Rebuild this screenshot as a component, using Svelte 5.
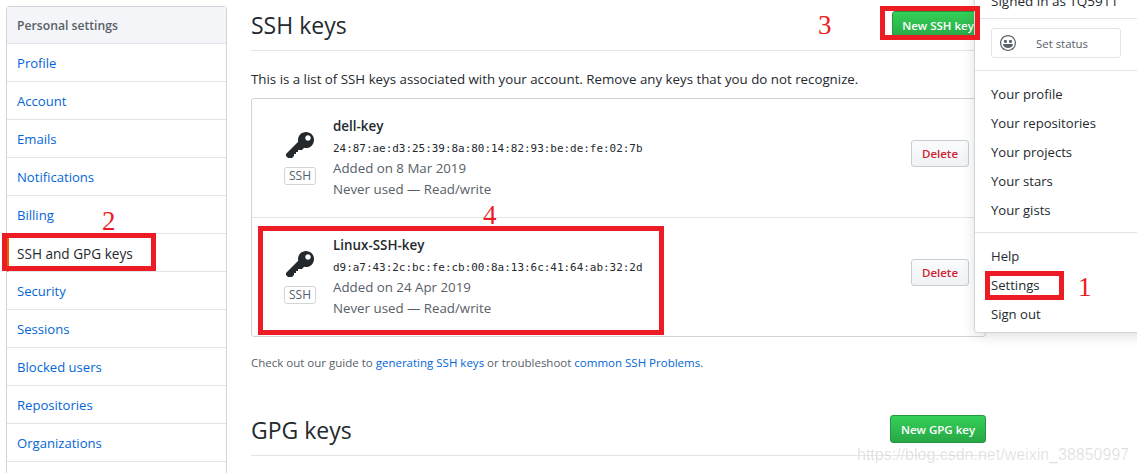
<script>
    const navItems = ["Profile", "Account", "Emails", "Notifications", "Billing", "SSH and GPG keys", "Security", "Sessions", "Blocked users", "Repositories", "Organizations", ""];

    const keys = [
        { name: "dell-key", print: "24:87:ae:d3:25:39:8a:80:14:82:93:be:de:fe:02:7b", added: "Added on 8 Mar 2019" },
        { name: "Linux-SSH-key", print: "d9:a7:43:2c:bc:fe:cb:00:8a:13:6c:41:64:ab:32:2d", added: "Added on 24 Apr 2019" }
    ];

    const keyPath = "M12.83 2.17C12.08 1.42 11.14 1.03 10 1c-1.13.03-2.08.42-2.83 1.17S6.04 3.86 6.01 5c0 .3.03.59.09.89L0 12v1l1 1h2l1-1v-1h1v-1h1v-1h2l1.09-1.11c.3.08.59.11.91.11 1.14-.03 2.08-.42 2.83-1.17S13.97 6.14 14 5c-.03-1.14-.42-2.08-1.17-2.83zM11 5.38c-.77 0-1.38-.61-1.38-1.38 0-.77.61-1.38 1.38-1.38.77 0 1.38.61 1.38 1.38 0 .77-.61 1.38-1.38 1.38z";
    const smileyPath = "M8 0C3.58 0 0 3.58 0 8s3.58 8 8 8 8-3.58 8-8-3.58-8-8-8zm4.81 12.81a6.72 6.72 0 0 1-2.17 1.45c-.83.36-1.72.53-2.64.53-.92 0-1.81-.17-2.64-.53-.81-.34-1.55-.83-2.17-1.45a6.773 6.773 0 0 1-1.45-2.17A6.59 6.59 0 0 1 1.21 8c0-.92.17-1.81.53-2.64.34-.81.83-1.55 1.45-2.17.62-.62 1.36-1.11 2.17-1.45A6.59 6.59 0 0 1 8 1.21c.92 0 1.81.17 2.64.53.81.34 1.55.83 2.17 1.45.62.62 1.11 1.36 1.45 2.17.36.83.53 1.72.53 2.64 0 .92-.17 1.81-.53 2.64-.34.81-.83 1.55-1.45 2.17zM4 6.8v-.59c0-.66.53-1.19 1.2-1.19h.59c.66 0 1.19.53 1.19 1.19v.59c0 .67-.53 1.2-1.19 1.2H5.2C4.53 8 4 7.47 4 6.8zm5 0v-.59c0-.66.53-1.19 1.2-1.19h.59c.66 0 1.19.53 1.19 1.19v.59c0 .67-.53 1.2-1.19 1.2h-.59C9.53 8 9 7.47 9 6.8zm4 3.2c-.72 1.88-2.91 3-5 3s-4.28-1.13-5-3c-.14-.39.23-1 .66-1h8.59c.41 0 .89.61.75 1z";
</script>

<div class="page">
    <nav class="sidebar">
        <div class="nav-head">Personal settings</div>
        {#each navItems as item}
            <div class="nav-item" class:selected={item === "SSH and GPG keys"}>{item}</div>
        {/each}
    </nav>

    <main class="content">
        <div class="section-head">
            <h2>SSH keys</h2>
            <button class="green ssh-btn">New SSH key</button>
        </div>
        <p class="intro">This is a list of SSH keys associated with your account. Remove any keys that you do not recognize.</p>

        <div class="key-box">
            {#each keys as key}
                <div class="key-row">
                    <div class="key-icon">
                        <svg width="28" height="32" viewBox="0 0 14 16"><path fill="#24292e" fill-rule="evenodd" d={keyPath} /></svg>
                        <span class="badge">SSH</span>
                    </div>
                    <div class="key-info">
                        <strong>{key.name}</strong>
                        <code>{key.print}</code>
                        <span>{key.added}</span>
                        <span>Never used — Read/write</span>
                    </div>
                    <button class="delete">Delete</button>
                </div>
            {/each}
        </div>

        <p class="guide">Check out our guide to <a href="#a">generating SSH keys</a> or troubleshoot <a href="#b">common SSH Problems</a>.</p>

        <div class="section-head gpg">
            <h2>GPG keys</h2>
            <button class="green">New GPG key</button>
        </div>
    </main>

    <div class="dropdown">
        <div class="signed">Signed in as TQ5911</div>
        <div class="status">
            <svg width="16" height="16" viewBox="0 0 16 16"><path fill="#586069" fill-rule="evenodd" d={smileyPath} /></svg>
            <span>Set status</span>
        </div>
        <div class="menu-group">
            <div>Your profile</div>
            <div>Your repositories</div>
            <div>Your projects</div>
            <div>Your stars</div>
            <div>Your gists</div>
        </div>
        <div class="menu-group last">
            <div>Help</div>
            <div>Settings</div>
            <div>Sign out</div>
        </div>
    </div>

    <!-- red annotations drawn over the screenshot -->
    <div class="mark box-nav"></div>
    <div class="mark box-new"></div>
    <div class="mark box-key"></div>
    <div class="mark box-settings"></div>
    <span class="num n1">1</span>
    <span class="num n2">2</span>
    <span class="num n3">3</span>
    <span class="num n4">4</span>

    <span class="watermark">https://blog.csdn.net/weixin_38850997</span>
</div>

<style>
    :global(body) {
        margin: 0;
        background: #fff;
    }

    .page {
        position: relative;
        width: 1137px;
        height: 473px;
        overflow: hidden;
        display: flex;
        align-items: flex-start;
        gap: 24px;
        padding-left: 6px;
        box-sizing: border-box;
        font-family: "Open Sans", "Noto Sans", sans-serif;
        font-size: 13.1px;
        color: #24292e;
    }

    .sidebar {
        width: 221px;
        flex: none;
        margin-top: 6px;
        box-sizing: border-box;
        border: 1px solid #d1d5da;
        border-radius: 3px;
    }

    .nav-head {
        height: 35px;
        padding: 1px 0 0 10px;
        line-height: 36px;
        background: #f3f5f8;
        border-bottom: 1px solid #e1e4e8;
        color: #586069;
        font-weight: 600;
        font-size: 12.2px;
    }

    .nav-item {
        height: 36px;
        padding: 1px 0 0 10px;
        line-height: 37px;
        border-bottom: 1px solid #e1e4e8;
        color: #0366d6;
    }

    .nav-item.selected {
        color: #24292e;
        font-size: 13.6px;
        border-left: 2px solid #e36209;
        padding-left: 8px;
    }

    .content {
        width: 735px;
        flex: none;
    }

    .section-head {
        display: flex;
        align-items: center;
        justify-content: space-between;
        height: 50px;
        border-bottom: 1px solid #e1e4e8;
    }

    h2 {
        margin: 0;
        font-size: 23px;
        font-weight: 400;
        line-height: 50px;
    }

    .green {
        width: 96px;
        height: 28px;
        padding: 0;
        border: 1px solid #25963d;
        border-radius: 3px;
        background: linear-gradient(#34d058, #28a745);
        color: #fff;
        font-family: inherit;
        font-size: 11.5px;
        font-weight: 600;
    }

    .ssh-btn {
        margin-right: -2px;
        padding-right: 4px;
    }

    .gpg .green {
        margin-bottom: 2px;
    }

    .intro {
        margin: 18px 0 0;
        line-height: 20px;
        font-size: 13.3px;
    }

    .key-box {
        margin-top: 9px;
        border: 1px solid #d1d5da;
        border-radius: 3px;
    }

    .key-row {
        display: flex;
        align-items: flex-start;
        height: 118px;
        box-sizing: border-box;
        padding: 17px 16px 0 32px;
    }

    .key-row + .key-row {
        height: 119px;
        border-top: 1px solid #e1e4e8;
    }

    .key-icon {
        width: 32px;
        flex: none;
        display: flex;
        flex-direction: column;
        align-items: center;
        padding-top: 14px;
    }

    .badge {
        margin-top: 5px;
        width: 32px;
        height: 18px;
        box-sizing: border-box;
        border: 1px solid #d1d5da;
        border-radius: 3px;
        text-align: center;
        font-size: 12px;
        line-height: 16px;
        color: #586069;
    }

    .key-info {
        flex: 1;
        margin-left: 17px;
        display: flex;
        flex-direction: column;
        font-size: 13.3px;
        line-height: 21px;
        color: #586069;
    }

    .key-info strong {
        color: #24292e;
        font-weight: 600;
        font-size: 13.4px;
    }

    .key-info code {
        font-family: "DejaVu Sans Mono", "Liberation Mono", monospace;
        font-size: 10.95px;
        margin-top: 2px;
        line-height: 19px;
        color: #24292e;
    }

    .delete {
        width: 58px;
        height: 27px;
        margin-top: 24px;
        padding: 0;
        border: 1px solid #c9cdd2;
        border-radius: 3px;
        background: linear-gradient(#fafbfc, #eff3f6);
        color: #cb2431;
        font-family: inherit;
        font-size: 11.5px;
        font-weight: 600;
    }

    .guide {
        margin: 17px 0 0;
        font-size: 11.5px;
        line-height: 18px;
        color: #586069;
    }

    a {
        color: #0366d6;
        text-decoration: none;
    }

    .gpg {
        margin-top: 33px;
    }

    .dropdown {
        position: absolute;
        left: 974px;
        top: -10px;
        width: 175px;
        height: 343px;
        box-sizing: border-box;
        background: #fff;
        border: 1px solid #d1d5da;
        border-radius: 4px;
        box-shadow: 0 3px 12px rgba(27, 31, 35, 0.15);
        padding-left: 16px;
        line-height: 29px;
        white-space: nowrap;
    }

    .signed {
        height: 27px;
        margin-left: -16px;
        padding-left: 16px;
        border-bottom: 1px solid #e1e4e8;
        line-height: 21px;
        font-size: 13.5px;
    }

    .status {
        width: 130px;
        height: 30px;
        margin-top: 9px;
        box-sizing: border-box;
        display: flex;
        align-items: center;
        gap: 20px;
        padding-left: 8px;
        border: 1px solid #e1e4e8;
        border-radius: 3px;
        font-size: 11.4px;
        color: #586069;
    }

    .menu-group {
        margin-left: -16px;
        margin-top: 12px;
        padding: 9px 0 7px 16px;
        border-top: 1px solid #e1e4e8;
    }

    .menu-group.last {
        margin-top: 0;
    }

    .mark {
        position: absolute;
        box-sizing: border-box;
        border: 5px solid #ed1c24;
    }

    .box-nav { left: 2px; top: 233px; width: 154px; height: 38px; }
    .box-new { left: 880px; top: 6px; width: 100px; height: 34px; }
    .box-key { left: 258px; top: 226px; width: 406px; height: 109px; }
    .box-settings { left: 985px; top: 271px; width: 79px; height: 29px; }

    .num {
        position: absolute;
        font-family: "Liberation Serif", serif;
        font-size: 27px;
        line-height: 30px;
        color: #ed1c24;
    }

    .n1 { left: 1078px; top: 272px; }
    .n2 { left: 102px; top: 206px; }
    .n3 { left: 818px; top: 10px; }
    .n4 { left: 483px; top: 200px; }

    .watermark {
        position: absolute;
        left: 857px;
        top: 445px;
        font-family: "Liberation Sans", sans-serif;
        font-size: 16px;
        line-height: 20px;
        color: rgba(0, 0, 0, 0.13);
        text-shadow: 0 0 2px #fff;
    }
</style>
